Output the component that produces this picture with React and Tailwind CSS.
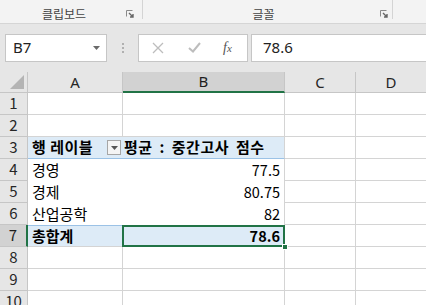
import React from 'react';

const ROWS = [1, 2, 3, 4, 5, 6, 7, 8, 9, 10];

// dialog launcher in the ribbon group corner
const Launcher = () => (
  <svg width="8" height="8" viewBox="0 0 8 8" className="block">
    <path d="M0.5 6.5 V0.5 H6.5" fill="none" stroke="#8a8a8a" strokeWidth="1" />
    <path d="M3 3 L7 7 M7 4 V7 H4" fill="none" stroke="#666" strokeWidth="1.4" />
  </svg>
);

const RowHead = ({ n, active }) => (
  <div
    className={
      active
        ? 'w-[28px] h-[22px] shrink-0 flex items-center justify-center bg-[#d2d2d2] border-r-2 border-b border-r-[#217346] border-b-[#c6c6c6] text-[15px] text-[#1e1e1e]'
        : 'w-[28px] h-[22px] shrink-0 flex items-center justify-center bg-[#e6e6e6] border-r border-b border-[#c6c6c6] text-[15px] text-[#262626]'
    }
  >
    {n}
  </div>
);

const Cell = ({ w, children, className = '' }) => (
  <div className={`${w} h-[22px] shrink-0 flex items-center ${className}`}>{children}</div>
);

function Row({ n }) {
  const grid = 'border-r border-b border-[#d4d4d4]';
  let a = null;
  let b = null;

  if (n === 3) {
    a = (
      <Cell w="w-[95px]" className="bg-[#ddebf7] border-b border-[#9bc2e6] pl-[4px] font-bold text-[15px] text-black">
        <span className="flex-1 whitespace-nowrap tracking-[0.5px]">행 레이블</span>
        <span className="w-[14px] h-[15px] mr-[2px] border border-[#a6a6a6] bg-[#f4f4f4] flex items-center justify-center">
          <svg width="7" height="4" viewBox="0 0 7 4">
            <path d="M0 0 H7 L3.5 4 Z" fill="#555" />
          </svg>
        </span>
      </Cell>
    );
    b = (
      <Cell w="w-[162px]" className="bg-[#ddebf7] border-b border-b-[#9bc2e6] border-r border-r-[#d4d4d4] pl-[1px] font-bold text-[15px] text-black whitespace-pre tracking-[0.5px] [word-spacing:3px]">
        {'평균 : 중간고사 점수'}
      </Cell>
    );
  } else if (n >= 4 && n <= 6) {
    const data = { 4: ['경영', '77.5'], 5: ['경제', '80.75'], 6: ['산업공학', '82'] }[n];
    a = (
      <Cell w="w-[95px]" className="bg-white pl-[4px] text-[15px] text-black">
        {data[0]}
      </Cell>
    );
    b = (
      <Cell w="w-[162px]" className="bg-white border-r border-[#d4d4d4] justify-end pr-[4px] text-[14.5px] text-black">
        {data[1]}
      </Cell>
    );
  } else if (n === 7) {
    a = (
      <Cell w="w-[95px]" className="bg-[#ddebf7] border-t border-t-[#9bc2e6] border-b border-b-[#d4d4d4] pl-[4px] font-bold text-[15px] text-black">
        총합계
      </Cell>
    );
    b = (
      <Cell w="w-[162px]" className="relative bg-[#ddebf7] border-t border-t-[#9bc2e6] border-b border-b-[#d4d4d4] border-r border-r-[#d4d4d4] justify-end pr-[4px] font-bold text-[14.5px] text-black">
        78.6
        <span className="absolute -left-[1px] -top-[1px] -right-[1px] -bottom-[1px] border-2 border-[#217346]" />
        <span className="absolute -right-[4px] -bottom-[4px] w-[6px] h-[6px] bg-[#217346] border border-white" />
      </Cell>
    );
  } else {
    a = <Cell w="w-[95px]" className={grid} />;
    b = <Cell w="w-[162px]" className={grid} />;
  }

  return (
    <div className="flex">
      <RowHead n={n} active={n === 7} />
      {a}
      {b}
      <Cell w="w-[71px]" className={grid} />
      <Cell w="w-[71px]" className={grid} />
    </div>
  );
}

export default function App() {
  return (
    <div className="w-[426px] h-[305px] overflow-hidden bg-white font-[family-name:'Noto_Sans_CJK_KR','Noto_Sans',sans-serif] text-[#222]">
      {/* Ribbon group labels */}
      <div className="h-[24px] flex bg-[#f3f3f3] border-b border-[#d5d5d5]">
        <div className="w-[143px] shrink-0 flex items-end border-r border-[#d4d4d4] mb-[4px]">
          <span className="flex-1 text-center text-[12px] leading-[14px] text-[#444] pl-[2px] translate-y-[2px]">클립보드</span>
          <span className="w-[16px] pb-[1px]">
            <Launcher />
          </span>
        </div>
        <div className="w-[250px] shrink-0 flex items-end border-r border-[#d4d4d4] mb-[4px]">
          <span className="flex-1 text-center text-[12px] leading-[14px] text-[#444] pl-[4px] translate-y-[2px]">글꼴</span>
          <span className="w-[12px] pb-[1px]">
            <Launcher />
          </span>
        </div>
        <div className="flex-1" />
      </div>

      {/* Formula bar */}
      <div className="h-[48px] bg-[#e6e6e6] flex items-center pb-[1px]">
        <div className="ml-[5px] w-[102px] h-[28px] bg-white border border-[#c6c6c6] flex items-center pl-[7px] pr-[6px]">
          <span className="flex-1 text-[15px] font-[family-name:'Noto_Sans',sans-serif] text-[#222]">B7</span>
          <svg width="7" height="4" viewBox="0 0 7 4">
            <path d="M0 0 H7 L3.5 4 Z" fill="#6a6a6a" />
          </svg>
        </div>
        <div className="w-[31px] flex flex-col items-center gap-[2px]">
          <span className="w-[2px] h-[2px] bg-[#b0b0b0]" />
          <span className="w-[2px] h-[2px] bg-[#b0b0b0]" />
          <span className="w-[2px] h-[2px] bg-[#b0b0b0]" />
        </div>
        <div className="w-[110px] h-[28px] bg-white border border-[#c6c6c6] flex items-center">
          <svg width="12" height="12" viewBox="0 0 12 12" className="ml-[13px]">
            <path d="M1 1 L11 11 M11 1 L1 11" stroke="#bdbdbd" strokeWidth="1.3" />
          </svg>
          <svg width="13" height="11" viewBox="0 0 13 11" className="ml-[24px]">
            <path d="M1 6 L5 9.5 L12 1" fill="none" stroke="#bdbdbd" strokeWidth="2" />
          </svg>
          <span className="ml-[22px] italic text-[14px] font-[family-name:'Liberation_Serif',serif] text-[#555]">
            f<span className="text-[11px]">x</span>
          </span>
        </div>
        <div className="ml-[3px] flex-1 h-[28px] bg-white border border-r-0 border-[#c6c6c6] flex items-center pl-[11px] text-[15px] font-[family-name:'Noto_Sans',sans-serif] text-[#222]">
          78.6
        </div>
      </div>

      {/* Column headers */}
      <div className="flex h-[21px] font-[family-name:'Noto_Sans',sans-serif]">
        <div className="w-[28px] shrink-0 bg-[#e6e6e6] border-r border-b border-[#c6c6c6] flex items-end justify-end pr-[3px] pb-[3px]">
          <svg width="14" height="14" viewBox="0 0 14 14">
            <path d="M14 0 V14 H0 Z" fill="#b4b4b4" />
          </svg>
        </div>
        <div className="w-[95px] shrink-0 bg-[#e6e6e6] border-r border-b border-[#c6c6c6] flex items-center justify-center text-[15px] text-[#262626]">A</div>
        <div className="w-[162px] shrink-0 bg-[#d2d2d2] border-r border-r-[#c6c6c6] border-b-2 border-b-[#217346] flex items-center justify-center text-[15px] text-[#1e1e1e]">B</div>
        <div className="w-[71px] shrink-0 bg-[#e6e6e6] border-r border-b border-[#c6c6c6] flex items-center justify-center text-[15px] text-[#262626]">C</div>
        <div className="w-[71px] shrink-0 bg-[#e6e6e6] border-r border-b border-[#c6c6c6] flex items-center justify-center text-[15px] text-[#262626]">D</div>
      </div>

      {ROWS.map((n) => (
        <Row key={n} n={n} />
      ))}
    </div>
  );
}
